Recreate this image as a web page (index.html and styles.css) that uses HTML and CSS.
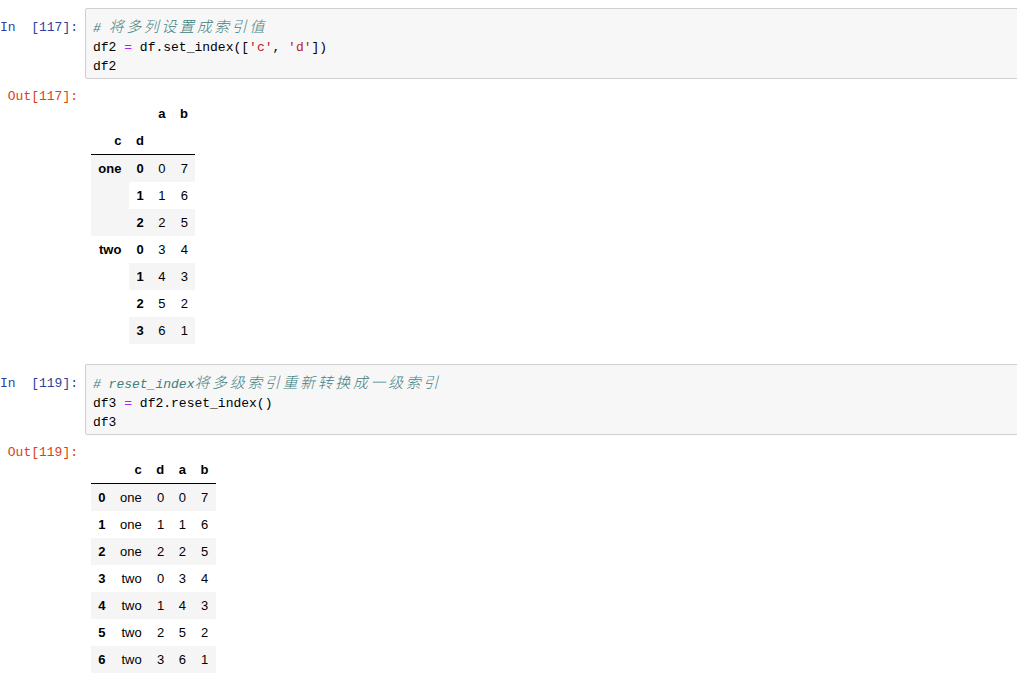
FILE: index.html
```html
<!DOCTYPE html>
<html>
<head>
<meta charset="utf-8">
<link rel="stylesheet" href="styles.css">
</head>
<body>
<div class="notebook">
  <div class="cell">
    <div class="input">
      <div class="prompt in-prompt">In&nbsp;&nbsp;[117]:</div>
      <div class="code"><pre><span class="cm"># <span class="cjk">将多列设置成索引值</span></span>
df2 <span class="op">=</span> df.set_index([<span class="str">'c'</span>, <span class="str">'d'</span>])
df2</pre></div>
    </div>
    <div class="output">
      <div class="prompt out-prompt">Out[117]:</div>
      <div class="result">
        <table class="df df1">
          <thead>
            <tr><th></th><th></th><th>a</th><th>b</th></tr>
            <tr><th>c</th><th>d</th><th></th><th></th></tr>
          </thead>
          <tbody>
            <tr><th rowspan="3">one</th><th>0</th><td>0</td><td>7</td></tr>
            <tr><th>1</th><td>1</td><td>6</td></tr>
            <tr><th>2</th><td>2</td><td>5</td></tr>
            <tr><th rowspan="4">two</th><th>0</th><td>3</td><td>4</td></tr>
            <tr><th>1</th><td>4</td><td>3</td></tr>
            <tr><th>2</th><td>5</td><td>2</td></tr>
            <tr><th>3</th><td>6</td><td>1</td></tr>
          </tbody>
        </table>
      </div>
    </div>
  </div>
  <div class="cell">
    <div class="input">
      <div class="prompt in-prompt">In&nbsp;&nbsp;[119]:</div>
      <div class="code"><pre><span class="cm"># reset_index<span class="cjk">将多级索引重新转换成一级索引</span></span>
df3 <span class="op">=</span> df2.reset_index()
df3</pre></div>
    </div>
    <div class="output">
      <div class="prompt out-prompt">Out[119]:</div>
      <div class="result">
        <table class="df df2">
          <thead>
            <tr><th></th><th>c</th><th>d</th><th>a</th><th>b</th></tr>
          </thead>
          <tbody>
            <tr><th>0</th><td>one</td><td>0</td><td>0</td><td>7</td></tr>
            <tr><th>1</th><td>one</td><td>1</td><td>1</td><td>6</td></tr>
            <tr><th>2</th><td>one</td><td>2</td><td>2</td><td>5</td></tr>
            <tr><th>3</th><td>two</td><td>0</td><td>3</td><td>4</td></tr>
            <tr><th>4</th><td>two</td><td>1</td><td>4</td><td>3</td></tr>
            <tr><th>5</th><td>two</td><td>2</td><td>5</td><td>2</td></tr>
            <tr><th>6</th><td>two</td><td>3</td><td>6</td><td>1</td></tr>
          </tbody>
        </table>
      </div>
    </div>
  </div>
</div>
</body>
</html>
```

FILE: styles.css
```css
html, body {
  margin: 0;
  padding: 0;
  background: #fff;
  overflow: hidden;
}

.notebook {
  font-family: "Liberation Mono", "Noto Sans CJK SC", monospace;
  font-size: 13px;
}

.cell {
  padding-top: 8px;
}

.input, .output {
  display: flex;
  align-items: flex-start;
}

.prompt {
  flex: 0 0 78px;
  padding-right: 7px;
  text-align: right;
  white-space: nowrap;
  line-height: 19px;
  font-family: "Liberation Mono", monospace;
  font-size: 13px;
}

.in-prompt {
  color: #303F9F;
  padding-top: 10px;
}

.out-prompt {
  color: #D84315;
  padding-top: 8px;
}

.code {
  flex: 1;
  margin-right: -20px;
  background: #f7f7f7;
  border: 1px solid #cfcfcf;
  border-radius: 2px;
  padding: 10px 7px 2px 7px;
}

.code pre {
  margin: 0;
  font-family: "Liberation Mono", "Noto Sans CJK SC", monospace;
  font-size: 13px;
  line-height: 19px;
  color: #000;
}

.cm {
  color: #408080;
  font-style: italic;
}

.cjk {
  font-family: "Noto Sans CJK SC", sans-serif;
  font-size: 15px;
  line-height: 12px;
  letter-spacing: 2.6px;
  font-style: italic;
  font-weight: 300;
}

.op {
  color: #AA22FF;
}

.str {
  color: #BA2121;
}

.result {
  flex: 1;
  padding: 21px 0 12px 6px;
}

.df {
  border-collapse: collapse;
  border: none;
  font-family: "Liberation Sans", Arial, sans-serif;
  font-size: 13px;
  color: #000;
}

.df th, .df td {
  padding: 7px 7.25px;
  line-height: 13px;
  text-align: right;
  vertical-align: middle;
  white-space: nowrap;
}

.df th {
  font-weight: bold;
}

.df tbody th {
  vertical-align: top;
}

.df thead {
  border-bottom: 1px solid #000;
}

.df tbody tr:nth-child(odd) {
  background: #f5f5f5;
}
```
